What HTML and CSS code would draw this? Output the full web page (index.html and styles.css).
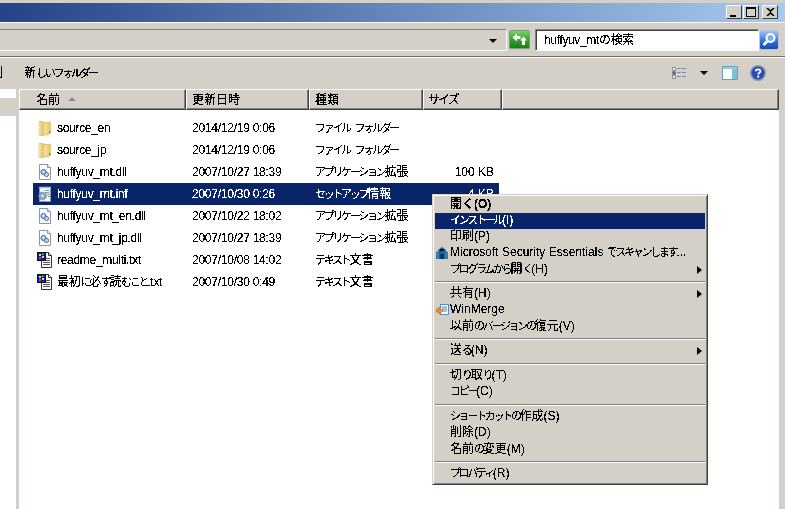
FILE: index.html
```html
<!DOCTYPE html>
<html lang="ja">
<head>
<meta charset="utf-8">
<title>huffyuv_mt</title>
<link rel="stylesheet" href="styles.css">
</head>
<body>
<svg class="defs" width="0" height="0" aria-hidden="true">
  <defs>
    <filter id="crisp" x="-5%" y="-20%" width="110%" height="140%" color-interpolation-filters="sRGB">
      <feComponentTransfer><feFuncA type="discrete" tableValues="0 0 0 0 1 1 1 1 1 1"/></feComponentTransfer>
    </filter>
    <linearGradient id="fold" x1="0" y1="0" x2="1" y2="0"><stop offset="0" stop-color="#f5e6a8"/><stop offset="1" stop-color="#e3c766"/></linearGradient>
    <linearGradient id="go" x1="0" y1="0" x2="0" y2="1"><stop offset="0" stop-color="#7fd66a"/><stop offset=".5" stop-color="#2ea82a"/><stop offset="1" stop-color="#157d18"/></linearGradient>
    <linearGradient id="find" x1="0" y1="0" x2="0" y2="1"><stop offset="0" stop-color="#a8c8f0"/><stop offset=".5" stop-color="#3a78d8"/><stop offset="1" stop-color="#0f48b0"/></linearGradient>
    <symbol id="i-folder" viewBox="0 0 16 16">
      <path d="M2 1.500h4l1 1h5.500v11.500l-8 1.500h-2.500z" fill="#e6cc70" stroke="#c9ae5c" stroke-width=".6"/>
      <path d="M2 2h4v13.500h-4z" fill="url(#fold)"/>
      <path d="M6.500 3l7-1v11.500l-7 2z" fill="url(#fold)" stroke="#d6bb62" stroke-width=".6"/>
      <rect x="12" y="11" width="1.500" height="2" fill="#4a9ac8"/>
    </symbol>
    <symbol id="i-dll" viewBox="0 0 16 16">
      <path d="M2.500 .5h8l3 3v12h-11z" fill="#fff" stroke="#8a96a6"/>
      <path d="M10.500 .5v3h3" fill="#dfe6ee" stroke="#8a96a6"/>
      <circle cx="6.500" cy="8" r="2.600" fill="#a8c4e4" stroke="#3a6ea8"/>
      <circle cx="9.500" cy="10.500" r="2.100" fill="#c6d8ec" stroke="#3a6ea8"/>
      <circle cx="6.500" cy="8" r=".8" fill="#fff"/>
    </symbol>
    <symbol id="i-inf" viewBox="0 0 16 16">
      <path d="M2.500 1.500h11v14h-11z" fill="#f4f6fa" stroke="#8a96a6"/>
      <path d="M3 .5v2M5 .5v2M7 .5v2M9 .5v2M11 .5v2M13 .5v2" stroke="#cfd6e0"/>
      <path d="M8 4.500h4M8 6.500h4M10 8.500h2.500M11 10.500h2" stroke="#7d8aa0"/>
      <circle cx="5.500" cy="10" r="3.800" fill="#8fa6c4" stroke="#5f7698" stroke-dasharray="1.500 1"/>
      <circle cx="5.500" cy="10" r="1.300" fill="#e8eef6"/>
    </symbol>
    <symbol id="i-txt" viewBox="0 0 16 16">
      <path d="M4.500 .5h7l3 3v12h-10z" fill="#fff" stroke="#333"/>
      <path d="M11.500 .5v3h3" fill="#ddd" stroke="#333"/>
      <path d="M9 6.500h4M9 8.500h4M6 10.500h7M6 12.500h7" stroke="#555"/>
      <rect x=".5" y=".5" width="8" height="8" fill="#0a1ea8" stroke="#111"/>
      <rect x="2" y="2" width="2" height="2" fill="#f2e020"/>
      <rect x="5" y="4" width="2" height="2" fill="#f2e020"/>
      <rect x="2" y="5" width="2" height="2" fill="#e04040"/>
      <rect x="5" y="1.500" width="1.500" height="1.500" fill="#40c8e8"/>
    </symbol>
  </defs>
</svg>
<div class="window">
  <header class="titlebar">
    <div class="caption-buttons">
      <button class="cap-btn" aria-label="最小化"><span class="glyph-min"></span></button>
      <button class="cap-btn" aria-label="最大化"><span class="glyph-max"></span></button>
      <button class="cap-btn cap-close" aria-label="閉じる">
        <svg width="9" height="8" viewBox="0 0 9 8"><path d="M1 0l3.500 3.200L8 0M1 8l3.500-3.200L8 8" fill="none" stroke="#000" stroke-width="1.600"/></svg>
      </button>
    </div>
  </header>

  <div class="addressbar">
    <div class="address-box"><span class="combo-arrow"></span></div>
    <button class="go-btn" aria-label="更新">
      <svg width="21" height="19" viewBox="0 0 21 19">
        <rect x=".5" y=".5" width="20" height="18" rx="1" fill="url(#go)" stroke="#7f9c7f"/>
        <path d="M3.500 7.500L8 3.500V6h3.500V9H8v2.500z" fill="#fff"/>
        <path d="M14.500 6.500L18 10.500h-2v4.500h-3v-4.500h-2z" fill="#fff"/>
      </svg>
    </button>
    <div class="search-box"><span class="txt">huffyuv_mtの検索</span></div>
    <button class="find-btn" aria-label="検索">
      <svg width="20" height="20" viewBox="0 0 20 20">
        <rect x=".5" y=".5" width="19" height="19" rx="2" fill="url(#find)" stroke="#b8c8e0"/>
        <circle cx="11.500" cy="8" r="4" fill="#7fb0ea" stroke="#fff" stroke-width="2"/>
        <path d="M8.500 11l-4 4" stroke="#fff" stroke-width="2.600"/>
      </svg>
    </button>
  </div>

  <div class="toolbar">
    <span class="tool-clip txt">刷</span>
    <span class="tool-new txt">新<span class="k">しいフォルダー</span></span>
    <div class="tool-right">
      <svg class="ico-views" width="15" height="12" viewBox="0 0 15 12">
        <path d="M.5 .5h3v3h-3zM.5 4.500h3v3h-3zM.5 8.500h3v3h-3z" fill="#fff" stroke="#7a8aa0"/>
        <rect x="1" y="5" width="2" height="2" fill="#c83c3c"/>
        <path d="M5 1.500h4M10 1.500h4M5 5.500h4M10 5.500h4M5 9.500h4M10 9.500h4" stroke="#7a8aa0"/>
      </svg>
      <span class="tool-arrow"></span>
      <svg class="ico-pane" width="16" height="14" viewBox="0 0 16 14">
        <rect x=".5" y=".5" width="15" height="13" fill="#fff" stroke="#6aa0b8"/>
        <rect x="1" y="1" width="14" height="2" fill="#9cc8e0"/>
        <rect x="10" y="3" width="5" height="10" fill="#7cc0d8"/>
      </svg>
      <svg class="ico-help" width="16" height="16" viewBox="0 0 16 16">
        <circle cx="8" cy="8" r="8" fill="#8c98b4"/>
        <circle cx="8" cy="8" r="6.500" fill="#2a4cb0"/>
        <path d="M5.800 6.200C5.800 3.800 10.400 3.800 10.400 6.200C10.400 7.800 8.200 7.800 8.200 9.600" fill="none" stroke="#fff" stroke-width="1.800"/>
        <rect x="7.200" y="10.600" width="2" height="2" fill="#fff"/>
      </svg>
    </div>
  </div>

  <div class="content">
    <aside class="sidebar">
      <div class="side-top"></div>
      <div class="side-gap"></div>
      <div class="side-bottom"></div>
    </aside>
    <main class="list">
      <div class="list-head">
        <div class="head-cell head-name"><span class="txt">名前</span><span class="sort-arrow"></span></div>
        <div class="head-cell head-date"><span class="txt">更新日時</span></div>
        <div class="head-cell head-type"><span class="txt">種類</span></div>
        <div class="head-cell head-size"><span class="txt k">サイズ</span></div>
        <div class="head-cell head-fill"></div>
      </div>
      <div class="rows">
        <div class="row">
          <div class="cell-name"><svg class="file-ico" width="16" height="16"><use href="#i-folder"/></svg><span class="txt">source_en</span></div>
          <div class="cell-date txt">2014/12/19 0:06</div><div class="cell-type txt"><span class="k">ファイル フォルダー</span></div><div class="cell-size txt"></div>
        </div>
        <div class="row">
          <div class="cell-name"><svg class="file-ico" width="16" height="16"><use href="#i-folder"/></svg><span class="txt">source_jp</span></div>
          <div class="cell-date txt">2014/12/19 0:06</div><div class="cell-type txt"><span class="k">ファイル フォルダー</span></div><div class="cell-size txt"></div>
        </div>
        <div class="row">
          <div class="cell-name"><svg class="file-ico" width="16" height="16"><use href="#i-dll"/></svg><span class="txt">huffyuv_mt.dll</span></div>
          <div class="cell-date txt">2007/10/27 18:39</div><div class="cell-type txt"><span class="k">アプリケーション</span>拡張</div><div class="cell-size txt">100 KB</div>
        </div>
        <div class="row selected">
          <div class="cell-name"><svg class="file-ico" width="16" height="16"><use href="#i-inf"/></svg><span class="txt">huffyuv_mt.inf</span></div>
          <div class="cell-date txt">2007/10/30 0:26</div><div class="cell-type txt"><span class="k">セットアップ</span>情報</div><div class="cell-size txt">4 KB</div>
        </div>
        <div class="row">
          <div class="cell-name"><svg class="file-ico" width="16" height="16"><use href="#i-dll"/></svg><span class="txt">huffyuv_mt_en.dll</span></div>
          <div class="cell-date txt">2007/10/22 18:02</div><div class="cell-type txt"><span class="k">アプリケーション</span>拡張</div><div class="cell-size txt"></div>
        </div>
        <div class="row">
          <div class="cell-name"><svg class="file-ico" width="16" height="16"><use href="#i-dll"/></svg><span class="txt">huffyuv_mt_jp.dll</span></div>
          <div class="cell-date txt">2007/10/27 18:39</div><div class="cell-type txt"><span class="k">アプリケーション</span>拡張</div><div class="cell-size txt"></div>
        </div>
        <div class="row">
          <div class="cell-name"><svg class="file-ico" width="16" height="16"><use href="#i-txt"/></svg><span class="txt">readme_multi.txt</span></div>
          <div class="cell-date txt">2007/10/08 14:02</div><div class="cell-type txt"><span class="k">テキスト</span>文書</div><div class="cell-size txt"></div>
        </div>
        <div class="row">
          <div class="cell-name"><svg class="file-ico" width="16" height="16"><use href="#i-txt"/></svg><span class="txt">最初<span class="k">に</span>必<span class="k">ず</span>読<span class="k">むこと</span>.txt</span></div>
          <div class="cell-date txt">2007/10/30 0:49</div><div class="cell-type txt"><span class="k">テキスト</span>文書</div><div class="cell-size txt"></div>
        </div>
      </div>
    </main>
  </div>
</div>

<nav class="menu">
  <div class="mi mi-default"><span class="txt">開く(O)</span></div>
  <div class="mi mi-active"><span class="txt"><span class="k">インストール</span>(I)</span></div>
  <div class="mi"><span class="txt">印刷(P)</span></div>
  <div class="mi">
    <svg class="mi-ico" width="12" height="12" viewBox="0 0 12 12">
      <path d="M6 0L10 3V12H2V3z" fill="#1f5f96"/>
      <path d="M0 5l3-1v8H0zM12 5L9 4v8h3z" fill="#2c7fb8"/>
      <rect x="4.500" y="7" width="3" height="5" fill="#0c2c50"/>
      <rect x="4" y="2" width="4" height="2" fill="#111"/>
    </svg><span class="txt">Microsoft Security Essentials <span class="k">でスキャンします</span>...</span>
  </div>
  <div class="mi mi-sub"><span class="txt"><span class="k">プログラムから</span>開<span class="k">く</span>(H)</span></div>
  <div class="sep"></div>
  <div class="mi mi-sub"><span class="txt">共有(H)</span></div>
  <div class="mi">
    <svg class="mi-ico" width="13" height="12" viewBox="0 0 13 12">
      <rect x="4.500" y=".5" width="8" height="10" fill="#fff" stroke="#5a8ac0"/>
      <path d="M6 3h5M6 5h5M6 7h5" stroke="#3a80c8"/>
      <path d="M0 5h3V3l4 3.500L3 10V8H0z" fill="#f09a20" stroke="#b05a10" stroke-width=".6"/>
    </svg><span class="txt">WinMerge</span>
  </div>
  <div class="mi"><span class="txt">以前<span class="k">のバージョンの</span>復元(V)</span></div>
  <div class="sep"></div>
  <div class="mi mi-sub"><span class="txt">送<span class="k">る</span>(N)</span></div>
  <div class="sep"></div>
  <div class="mi"><span class="txt">切<span class="k">り</span>取<span class="k">り</span>(T)</span></div>
  <div class="mi"><span class="txt"><span class="k">コピー</span>(C)</span></div>
  <div class="sep"></div>
  <div class="mi"><span class="txt"><span class="k">ショートカットの</span>作成(S)</span></div>
  <div class="mi"><span class="txt">削除(D)</span></div>
  <div class="mi"><span class="txt">名前<span class="k">の</span>変更(M)</span></div>
  <div class="sep"></div>
  <div class="mi"><span class="txt"><span class="k">プロパティ</span>(R)</span></div>
</nav>
</body>
</html>
```
FILE: styles.css
```css
* { box-sizing: border-box; }
html, body { margin: 0; padding: 0; }
body {
  width: 785px;
  height: 509px;
  overflow: hidden;
  background: #d4d0c8;
  color: #000;
  font: 12px/16px "Liberation Sans", "Noto Sans CJK JP", sans-serif;
  position: relative;
}
.defs { position: absolute; }
.window { display: flex; flex-direction: column; height: 509px; }

/* aliased, bitmap-like text: threshold the glyph coverage */
.txt { filter: url(#crisp); display: inline-block; white-space: nowrap; }
/* narrow kana of the original UI font */
.k { font-size: 11px; letter-spacing: -2.3px; word-spacing: 4px; }

.titlebar {
  margin-top: 3px;
  flex: none;
  border-bottom: 1px solid #fff;
  background: linear-gradient(to right, #234488, #a6caf0);
  display: flex;
  justify-content: flex-end;
  padding: 2px 7px 0 0;
  height: 20px;
}
.caption-buttons { display: flex; gap: 1px; }
.cap-btn {
  width: 16px;
  height: 14px;
  padding: 0;
  background: #d4d0c8;
  border: 1px solid;
  border-color: #fff #404040 #404040 #fff;
  display: flex;
  align-items: center;
  justify-content: center;
}
.cap-close { margin-left: 2px; }
.glyph-min { width: 6px; height: 2px; background: #000; margin-top: 7px; margin-right: 3px; }
.glyph-max { width: 10px; height: 10px; border: 1px solid #000; border-top-width: 2px; }

.addressbar {
  height: 34px;
  flex: none;
  display: flex;
  align-items: flex-start;
  padding-top: 6px;
  border-bottom: 1px solid #6f6d68;
}
.address-box {
  width: 507px;
  height: 22px;
  border-top: 1px solid #808080;
  border-bottom: 1px solid #fff;
  border-right: 1px solid #fff;
  position: relative;
}
.combo-arrow {
  position: absolute;
  right: 9px;
  top: 9px;
  border: 4px solid transparent;
  border-top: 4px solid #000;
  border-bottom: 0;
}
.go-btn, .find-btn { padding: 0; border: 0; background: none; display: block; }
.go-btn { margin: 1px 0 0 2px; width: 21px; height: 19px; }
.search-box {
  width: 224px;
  height: 22px;
  margin-left: 5px;
  padding: 2px 0 0 8px;
  background: #fff;
  border: 1px solid;
  border-color: #808080 #fff #fff #808080;
  box-shadow: inset 1px 1px 0 #404040;
  letter-spacing: -.35px;
}
.find-btn { width: 20px; height: 20px; margin: 1px 0 0 0; }

.toolbar {
  height: 32px;
  flex: none;
  display: flex;
  align-items: center;
  border-top: 1px solid #fff;
  padding-bottom: 2px;
  overflow: hidden;
}
.tool-clip { margin-left: -9px; }
.tool-new { margin-left: 21px; }
.tool-right { margin-left: auto; display: flex; align-items: center; margin-right: 19px; }
.tool-arrow { margin-left: 13px; border: 4px solid transparent; border-top: 4px solid #000; border-bottom: 0; }
.ico-pane { margin-left: 14px; }
.ico-help { margin-left: 12px; }

.content { flex: 1; display: flex; min-height: 0; }
.sidebar { width: 16px; flex: none; display: flex; flex-direction: column; }
.side-top { height: 9px; background: #fff; }
.side-gap { height: 18px; }
.side-bottom { flex: 1; background: #fff; }

.list { width: 760px; margin-left: 3px; background: #fff; display: flex; flex-direction: column; }
.list-head { display: flex; height: 21px; flex: none; }
.head-cell {
  background: #d4d0c8;
  border: 1px solid;
  border-color: #fff #404040 #404040 #fff;
  box-shadow: inset -1px -1px 0 #808080;
  padding: 2px 0 0 5px;
  white-space: nowrap;
  display: flex;
  align-items: flex-start;
}
.head-name { width: 167px; padding-left: 16px; }
.head-date { width: 123px; }
.head-type { width: 114px; }
.head-size { width: 79px; padding-left: 4px; }
.head-size .k { font-size: 12px; letter-spacing: -2px; }
.head-fill { flex: 1; }
.sort-arrow {
  margin: 5px 0 0 8px;
  border: 4px solid transparent;
  border-bottom: 4px solid #8a8a8a;
  border-top: 0;
}

.rows { padding: 7px 0 0 14px; }
.row { display: flex; align-items: center; height: 22px; width: 466px; white-space: nowrap; }
.row.selected { background: #0a246a; color: #fff; }
.cell-name { width: 159px; display: flex; align-items: center; padding-left: 4px; letter-spacing: -.3px; }
.file-ico { margin-right: 4px; flex: none; }
.cell-date { width: 123px; letter-spacing: -.25px; }
.cell-type { width: 114px; }
.cell-size { width: 65px; text-align: right; }

.menu {
  position: absolute;
  left: 432px;
  top: 194px;
  width: 276px;
  height: 291px;
  padding: 1.500px 2px;
  background: #d4d0c8;
  border: 1px solid;
  border-color: #d4d0c8 #404040 #404040 #d4d0c8;
  box-shadow: inset 1px 1px 0 #fff, inset -1px -1px 0 #808080;
}
.mi {
  height: 16.25px;
  padding-left: 15px;
  position: relative;
  white-space: nowrap;
  line-height: 15px;
}
.mi-default { font-weight: 700; }
.mi-active { background: #0a246a; color: #fff; }
.mi-ico { position: absolute; left: 1px; top: 2px; }
.mi-sub::after {
  content: "";
  position: absolute;
  right: 3px;
  top: 4px;
  border: 4px solid transparent;
  border-left: 5px solid #000;
  border-right: 0;
}
.sep {
  height: 2px;
  margin: 3px 0 3.450px;
  background: #808080;
  border-bottom: 1px solid #fff;
}
```
